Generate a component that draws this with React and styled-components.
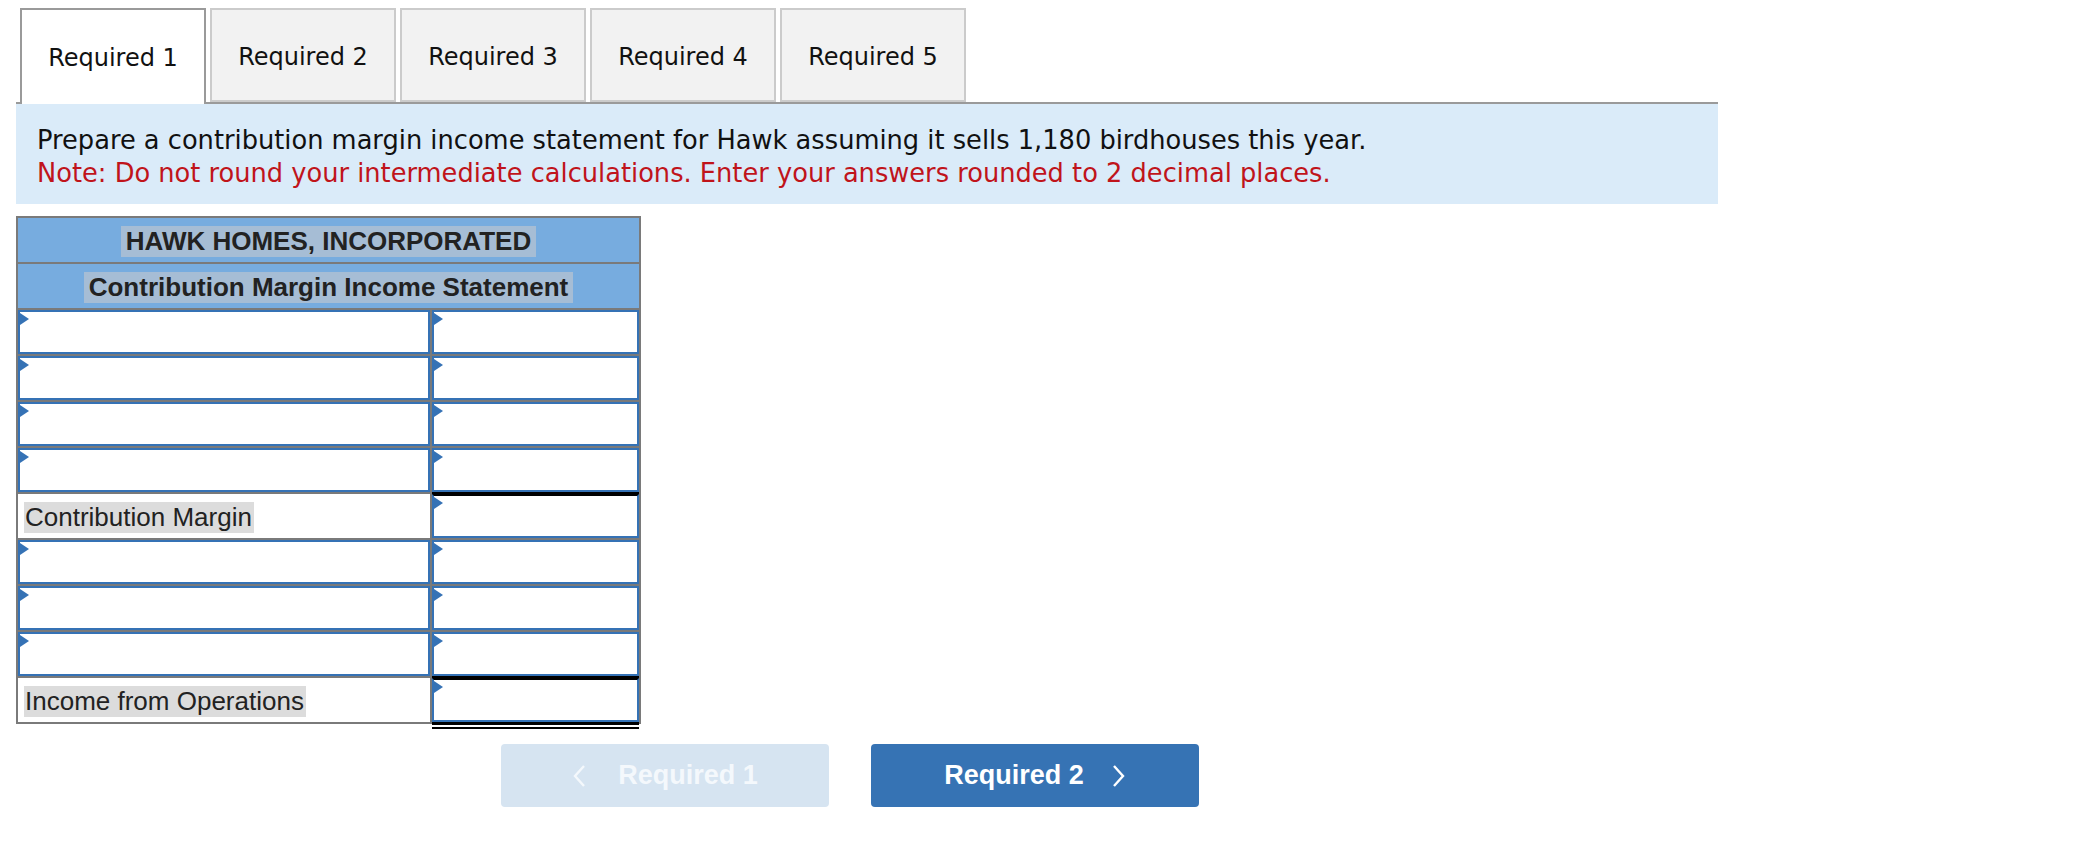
import React from "react"
import styled, { createGlobalStyle } from "styled-components"

const GlobalStyle = createGlobalStyle`
  body {
    margin: 0;
    background: #ffffff;
    font-family: "DejaVu Sans", Verdana, sans-serif;
  }
`

const Page = styled.div`
  width: 1702px;
  padding: 0 0 0 16px;
`

const TabBar = styled.div`
  display: flex;
  align-items: flex-end;
  gap: 4px;
  padding-left: 4px;
  height: 102px;
  border-bottom: 2px solid #9a9a9a;
`

const Tab = styled.div`
  width: 186px;
  box-sizing: border-box;
  height: ${p => (p.$active ? "96px" : "94px")};
  margin-bottom: ${p => (p.$active ? "-2px" : "0")};
  display: flex;
  align-items: center;
  justify-content: center;
  padding-top: ${p => (p.$active ? "2px" : "4px")};
  background: ${p => (p.$active ? "#ffffff" : "#f2f2f2")};
  border: 2px solid ${p => (p.$active ? "#9a9a9a" : "#cbcbcb")};
  border-bottom: ${p => (p.$active ? "none" : "2px solid #cbcbcb")};
  font-size: 24px;
  color: #111;
`

const Prompt = styled.div`
  background: #daebf9;
  padding: 20px 21px 14px;
  font-size: 25.7px;
  line-height: 33px;
  color: #111;
`

const Note = styled.div`
  color: #c0141b;
`

const Statement = styled.table`
  margin-top: 12px;
  width: 625px;
  border-collapse: collapse;
  border: 2px solid #7a7a7a;
  font-family: "Liberation Sans", Arial, sans-serif;
`

const HeadCell = styled.td`
  height: 44px;
  padding: 0;
  background: #77acdf;
  border: 2px solid #7a7a7a;
  text-align: center;
  vertical-align: middle;
`

const HeadText = styled.span`
  display: inline-block;
  background: #a6bdd5;
  padding: 0 5px;
  margin-top: 2px;
  line-height: 31px;
  font-size: 26px;
  font-weight: bold;
  color: #222;
`

const Cell = styled.td`
  height: 44px;
  padding: 0;
  border: 2px solid #7a7a7a;
  width: ${p => p.$w};
  vertical-align: middle;
  background: #ffffff;
`

const Field = styled.div`
  position: relative;
  box-sizing: border-box;
  height: 44px;
  border: 2px solid #3572b5;
  border-top-color: ${p => (p.$topRule ? "#000" : "#3572b5")};
  box-shadow: ${p =>
    [
      p.$topRule ? "0 -2px 0 0 #000" : null,
      p.$double ? "0 3px 0 0 #000, 0 5px 0 0 #fff, 0 7px 0 0 #000" : null,
    ]
      .filter(Boolean)
      .join(", ") || "none"};
  background: #ffffff;

  &::before {
    content: "";
    position: absolute;
    left: 0;
    top: 1px;
    border-top: 6px solid transparent;
    border-bottom: 6px solid transparent;
    border-left: 9px solid #3572b5;
  }
`

const Label = styled.span`
  display: inline-block;
  margin: 2px 0 0 6px;
  padding: 0 2px 0 1px;
  background: #dcdcdc;
  font-size: 26px;
  line-height: 31px;
  color: #222;
`

const Nav = styled.div`
  display: flex;
  gap: 42px;
  padding: 20px 0 0 485px;
`

const NavButton = styled.button`
  width: 328px;
  height: 63px;
  border: none;
  border-radius: 4px;
  display: flex;
  align-items: center;
  justify-content: center;
  gap: ${p => (p.$disabled ? "32px" : "28px")};
  padding: 0;
  font-family: "Liberation Sans", Arial, sans-serif;
  font-size: 27px;
  font-weight: bold;
  color: ${p => (p.$disabled ? "#f4f8fc" : "#ffffff")};
  background: ${p => (p.$disabled ? "#d6e4f1" : "#3673b4")};
  cursor: ${p => (p.$disabled ? "default" : "pointer")};
`

const Chevron = ({ dir }) => (
  <svg width="14" height="24" viewBox="0 0 14 24" fill="none">
    <path
      d={dir === "left" ? "M12 2 L3 12 L12 22" : "M2 2 L11 12 L2 22"}
      stroke="currentColor"
      strokeWidth="2.4"
    />
  </svg>
)

const rows = [
  { kind: "input" },
  { kind: "input" },
  { kind: "input" },
  { kind: "input" },
  { kind: "label", text: "Contribution Margin" },
  { kind: "input" },
  { kind: "input" },
  { kind: "input" },
  { kind: "label", text: "Income from Operations", double: true },
]

const App = () => {
  return (
    <Page>
      <GlobalStyle />
      <TabBar>
        {[1, 2, 3, 4, 5].map(n => (
          <Tab key={n} $active={n === 1}>Required {n}</Tab>
        ))}
      </TabBar>
      <Prompt>
        <div>Prepare a contribution margin income statement for Hawk assuming it sells 1,180 birdhouses this year.</div>
        <Note>Note: Do not round your intermediate calculations. Enter your answers rounded to 2 decimal places.</Note>
      </Prompt>
      <Statement>
        <tbody>
          <tr>
            <HeadCell colSpan={2}><HeadText>HAWK HOMES, INCORPORATED</HeadText></HeadCell>
          </tr>
          <tr>
            <HeadCell colSpan={2}><HeadText>Contribution Margin Income Statement</HeadText></HeadCell>
          </tr>
          {rows.map((r, i) => (
            <tr key={i}>
              <Cell $w="412px">
                {r.kind === "input" ? <Field /> : <Label>{r.text}</Label>}
              </Cell>
              <Cell $w="207px">
                <Field $topRule={r.kind === "label"} $double={r.double} />
              </Cell>
            </tr>
          ))}
        </tbody>
      </Statement>
      <Nav>
        <NavButton $disabled>
          <Chevron dir="left" />
          <span>Required 1</span>
        </NavButton>
        <NavButton>
          <span>Required 2</span>
          <Chevron dir="right" />
        </NavButton>
      </Nav>
    </Page>
  )
}

export default App
